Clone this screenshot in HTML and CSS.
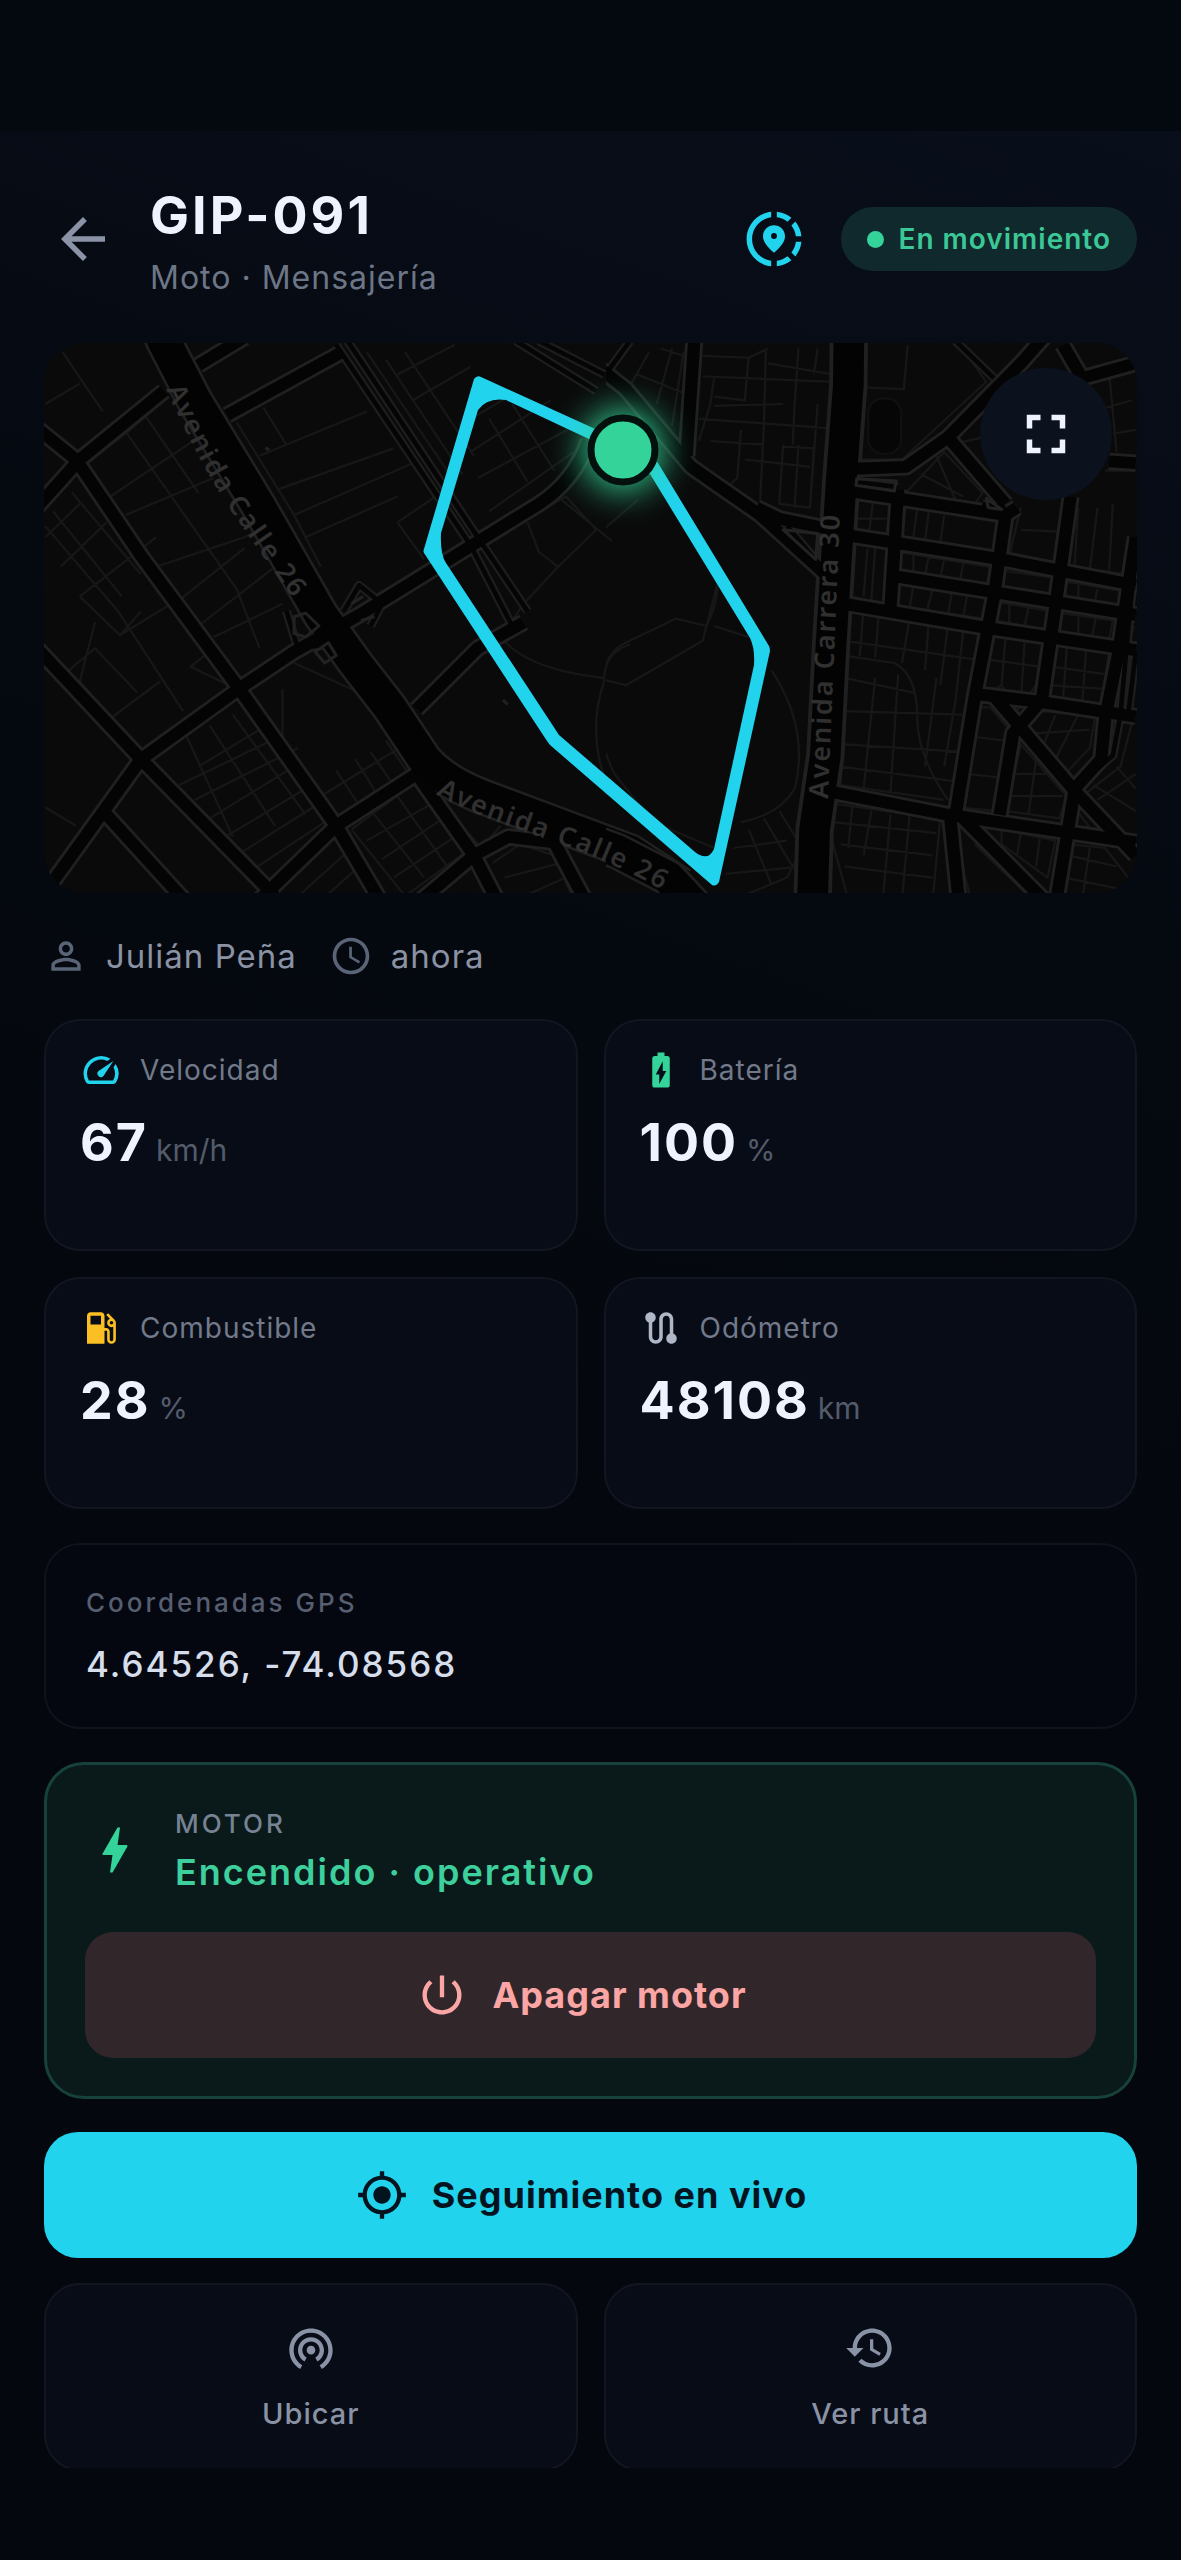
FILE: index.html
```html
<!DOCTYPE html>
<html lang="es">
<head>
    <meta charset="UTF-8">
    <meta name="viewport" content="width=device-width, initial-scale=1.0">
    <title>GIP-091</title>
    <link rel="stylesheet" href="styles.css">
</head>
<body>
    <header class="topbar">
        <button class="icon-btn back" aria-label="Volver">
            <svg class="icon icon-xl" viewBox="0 0 24 24"><path d="M20 11H7.83l5.59-5.59L12 4l-8 8 8 8 1.41-1.41L7.83 13H20v-2z"/></svg>
        </button>
        <div class="heading">
            <h1>GIP-091</h1>
            <p>Moto · Mensajería</p>
        </div>
        <button class="icon-btn share" aria-label="Compartir ubicación">
            <svg class="icon icon-xl" viewBox="0 0 24 24"><path d="M13.02 19.93v2.02c2.01-.2 3.84-1 5.32-2.21l-1.42-1.43c-1.11.86-2.44 1.44-3.9 1.62zM4.03 12c0-4.05 3.03-7.41 6.95-7.93V2.05C5.95 2.58 2.03 6.84 2.03 12c0 5.16 3.92 9.42 8.95 9.95v-2.02c-3.92-.52-6.95-3.88-6.95-7.93zM19.95 11h2.02c-.2-2.01-1-3.84-2.21-5.32l-1.43 1.43c.86 1.1 1.44 2.43 1.62 3.89zM18.34 4.26c-1.48-1.21-3.32-2.01-5.32-2.21v2.02c1.46.18 2.79.76 3.9 1.62l1.42-1.43zM18.33 16.9l1.43 1.42c1.21-1.48 2.01-3.31 2.21-5.32h-2.02c-.18 1.46-.76 2.79-1.62 3.9zM16 11.1C16 8.61 14.1 7 12 7s-4 1.61-4 4.1c0 1.66 1.33 3.63 4 5.9 2.67-2.27 4-4.24 4-5.9zm-4 .9a1.07 1.07 0 0 1 0-2.14A1.07 1.07 0 0 1 12 12z"/></svg>
        </button>
        <span class="status">En movimiento</span>
    </header>

    <main class="content">
        <section class="map">
            <svg class="map-canvas" viewBox="44 343 1093 550" preserveAspectRatio="xMidYMid slice" role="img" aria-label="Mapa">
                <defs>
                    <path id="w-avenue" d="M330-20L350 30L430 190L600 480L760 770L850 900L940 1020L1030 1160Q1080 1220 1180 1260L1568 1410L1700 1500"/>
                    <path id="w-road" d="M0 250L120 350L290 610L540 960L800 1340L930 1568M0 500L130 350L350 165M60 1490L290 1160L545 970L690 870L860 770L1150 585L1330 470Q1420 410 1460 300M0 840L290 1160L640 1530M600 1540L800 1340L1010 1200M200 1310L420 1560M440 95L560 20M515 230L815 60M1010 1025L1170 860L1290 790M1010 1200L1160 1420L1230 1560M1000 1560L1160 1420L1250 1370L1370 1385L1450 1540"/>
                    <path id="w-lane" d="M800 40L1150 580L1260 800M830 30L1170 560L1300 760M1270 30L1480 165M1330 30L1500 120M820 760L860 690L920 740L890 800M670 760L700 860L780 850L830 910"/>
                    <path id="w-thin" d="M85 60L190 220M40 200L130 145M240 260L540 700L600 860M300 230L440 440M160 350L250 280L350 190M210 450L440 290M250 500L480 400M330 640L560 560L600 540M390 730L560 590M440 800L640 640M170 330L240 270M40 530L230 760L400 1030M60 490L240 720M110 440L290 660M40 560L130 470M80 640L200 520M130 720L230 640L330 560M130 720L235 825L290 760M170 790L130 950L220 1060M235 825L400 720M90 930L170 860L280 980M210 1050L340 950M520 960L420 910L480 860M540 250L690 500L760 640M610 210L670 310M600 340L880 220M650 430L950 320M690 500L1000 360M720 560L960 450M960 520L1030 620M960 520L1060 450M480 830L660 740M660 970L660 1110L770 1300M690 900L860 980M930 80L1130 390M980 60L1160 340M880 60L1090 380M960 120L1110 40M1000 190L1150 100M1120 260L1250 180M1150 330L1360 190M1170 400L1440 250M1200 490L1420 330M1200 240L1300 410M1260 200L1370 380M1190 570L1300 510L1400 450L1480 540L1380 640L1330 600L1300 520M1390 460L1520 570M1380 640L1290 740L1230 830Q1300 920 1500 940M1568 850Q1500 870 1500 950Q1450 1100 1520 1260M410 1100L530 1370M470 1070L640 1340M530 1040L720 1310M440 1180L600 1080M390 1230L650 1100M430 1270L700 1130M470 1320L690 1180M510 1370L720 1240M540 1420L740 1290M580 1460L770 1330M760 1260L980 1120M800 1190L870 1300M850 1160L910 1260M890 1140L950 1230M930 1110L990 1200M840 1350L1010 1220L1140 1410L980 1530L840 1350M880 1380L1050 1280M920 1430L1080 1320M950 1480L1110 1370M900 1310L1030 1480M960 1260L1090 1450M650 1500L780 1390M690 1540L830 1410M740 1560L860 1450M1210 1440L1280 1390L1370 1420L1420 1540M1240 1480L1390 1440M1270 1540L1400 1480M40 1290L120 1340M1110 1320L1180 1400L1230 1340"/>
                    <path id="e-avenue" d="M702-20L700 150L682 400L655 850L640 1150L612 1350L606 1568"/>
                    <path id="e-road" d="M298 30L278 340M-100-20L120 160L290 370L470 500L640 660M460 480L520 510L660 540M715 375L850 370L960 290L1150 90L1210 20M1260 40L1310 130L1450 90M700 435L1110 500L1140 480M700 555L1100 620L1450 690M820 665L1450 770M690 740L1060 805L1450 865M1040 985L1200 1005L1450 1045M640 1245L960 1310L1450 1385M960 290L1110 470M1380 355L1450 360M830 430L810 750M1110 500L1080 720L1030 990L980 1310M1280 450L1240 750L1205 1000L1130 1090L1095 1310M1450 560L1405 870L1370 1050L1360 1160L1290 1240M1080 990L1290 1245L1450 1420M1290 1245L1240 1560M965 1310L990 1560M990 1310L1210 1540"/>
                    <path id="e-lane" d="M980 30L1080 130M130 30L60 130M1440 700L1410 1040L1390 1150L1290 1240M540 530L630 640M720 410L830 425M1050 470L1110 480M1450 870L1430 1040"/>
                    <path id="e-thin" d="M180 60L120 170M240 50L200 200M270 60L240 260M210 50L270 70M150 120L270 170M320 70L440 75L430 190L350 180M320 125L660 140M350 130L340 200L310 300M350 205L530 200M310 240L650 265M340 300L480 310M440 75L490 50M490 90L660 120M485 50L480 250L470 460M420 270L410 400L380 430M570 50L560 200L555 310M620 50L610 120M530 310L520 470L600 480L610 320L530 315M570 310L560 480M430 350L600 370M620 200L600 480M855 40L845 160L740 155M740 40L725 350L840 350L1060 140L990 40M850 440L950 330L1050 440L1030 470L850 440M890 390L1000 450M930 340L980 460M970 310L1050 290M1150 480L1120 610L1250 630L1270 470M1150 540L1250 545M1300 480L1290 640L1420 660L1445 560M1350 480L1330 650M1390 470L1380 660M1370 380L1450 380M1310 150L1440 110M1370 210L1440 190M1390 280L1450 270M1380 110L1400 330M720 460L710 540L800 550L810 470L720 460M765 460L755 540M720 510L800 510M845 475L830 560L1080 600L1095 520L845 475M880 480L870 560M910 490L900 570M950 500L940 575M710 575L705 720L795 740L800 590L710 575M750 590L740 720M770 590L760 730M830 600L1070 640L1060 695L825 655ZM870 610V660M910 610L900 665M950 620L940 670M1000 630L990 685M830 685L1060 725L1050 780L825 745ZM870 690L860 750M920 700L905 760M970 710L960 770M1010 715L1000 775M1100 650L1240 670L1230 725L1095 700ZM1090 735L1225 760L1215 810L1080 785ZM1120 740V790M1170 750L1160 800M1270 680L1415 705L1410 755L1265 735ZM1255 765L1390 785L1380 840L1250 820ZM1300 690V740M1350 700L1340 750M1300 770V830M1345 780L1335 835M1420 795L1445 800L1435 850L1415 845ZM700 750L690 870M740 750L730 880M780 760L770 885M700 750L1040 810L1020 990M860 780L840 900M910 790L900 920M960 800L940 960M1000 810L980 1000M690 840L1030 890M690 880L820 900Q880 930 880 1050Q880 1150 960 1270M690 940L870 980M690 1030L1020 1040M690 1120L1000 1140M680 1180L980 1220M770 940L740 1240M830 930L810 1250M930 940L900 1180M980 1000L950 1180M690 960L680 1230L950 1270M1070 820L1050 990L1100 960L1140 1030L1190 960L1210 840L1070 820M1110 830L1100 960M1160 840L1150 1010M1060 890L1200 910M1235 850L1220 990L1360 1010L1380 870ZM1270 860L1260 1000M1320 870L1310 1010M1230 910L1370 930M1225 960L1365 970M1400 880L1430 885L1410 1020L1385 1015ZM1040 1020L990 1290L1090 1300L1120 1080L1070 1020ZM1030 1100L1110 1110M1010 1200L1100 1210M1165 1065L1200 1030L1345 1040L1330 1130L1270 1195ZM1240 1040L1210 1120M1300 1040L1240 1160M1190 1090L1330 1080M1150 1120L1110 1300L1250 1320L1270 1260ZM1190 1160L1170 1310M1130 1200L1220 1200M1120 1260L1260 1260M1380 1050L1360 1140L1290 1220M1400 1050L1390 1150L1310 1230M1440 1060L1410 1180L1310 1260L1390 1360L1450 1370M1340 1230L1450 1300M1350 1270L1450 1200M1400 1180L1450 1240M1290 1290L1330 1345L1285 1340ZM660 1280L940 1320L920 1540M660 1280L655 1370L700 1540M710 1290L700 1400M760 1300L740 1420M810 1310L790 1540M860 1310L840 1540M660 1330L930 1360M680 1390L920 1420M690 1450L920 1480M1100 1350L1240 1380L1220 1480L1100 1390ZM1150 1360L1140 1420M1200 1370L1190 1450M1280 1390L1370 1400L1430 1480M1275 1420L1400 1450M1265 1480L1450 1520M1330 1400L1310 1540M970 1340L1020 1540M1030 1390L1170 1530M500 920Q600 1080 560 1240Q520 1310 420 1330M40 1000Q60 880 110 850L250 780L330 800Q360 740 360 680M360 680L320 840L120 960L0 930M60 940Q20 1050 90 1200L190 1330L350 1400M0 600L60 540L150 460M0 490L50 530M350 800L440 830M520 1300L580 1400L540 1480L400 1540M440 1350L500 1500M480 1320L560 1460M400 1400L540 1380M380 1470L580 1450"/>
                </defs>

                <rect class="land" x="44" y="343" width="1093" height="550"/>
                <!-- oeste -->
                <g transform="translate(30 330) scale(.3827 .37)">
                    <use class="street" href="#w-thin"/>
                    <use class="lane-edge" href="#w-lane"/>
                    <use class="road-edge" href="#w-road"/>
                    <use class="avenue-edge" href="#w-avenue"/>
                    <use class="lane" href="#w-lane"/>
                    <use class="road" href="#w-road"/>
                    <use class="avenue" href="#w-avenue"/>
                    <path class="island" d="M840 740L870 720M865 785L900 775M690 775L720 765L755 800L720 830L690 820ZM745 870L780 845L800 880L770 900ZM615 318L625 324M1236 1000L1248 1012"/>
                </g>
                <!-- este -->
                <svg x="606" y="343" width="531" height="550" viewBox="606 343 531 550">
                    <g transform="translate(580 330) scale(.3833 .37)">
                        <use class="street" href="#e-thin"/>
                        <use class="lane-edge" href="#e-lane"/>
                        <use class="road-edge" href="#e-road"/>
                        <use class="avenue-edge" href="#e-avenue"/>
                        <path class="avenue-edge" d="M-30 1360L100 1410L230 1480L320 1580"/>
                        <use class="lane" href="#e-lane"/>
                        <use class="road" href="#e-road"/>
                        <use class="avenue narrow" href="#e-avenue"/>
                        <path class="avenue" d="M-30 1360L100 1410L230 1480L320 1580"/>
                        <rect class="track" x="752" y="185" width="86" height="150" rx="40"/>
                        <path class="island" d="M722 402L825 408L820 435L720 420ZM1060 455L1100 485L1065 480ZM530 540L620 550L615 620Z"/>
                    </g>
                </svg>

                <path id="label-a" class="guide" d="M166 389Q200 465 230 509T330 650"/>
                <path id="label-b" class="guide" d="M436 794C500 832 600 845 690 908"/>
                <path id="label-c" class="guide" d="M828 799L841 490"/>
                <text class="street-name"><textPath href="#label-a">Avenida Calle 26</textPath></text>
                <text class="street-name"><textPath href="#label-b">Avenida Calle 26</textPath></text>
                <text class="street-name"><textPath href="#label-c">Avenida Carrera 30</textPath></text>

                <!-- recorrido -->
                <path class="route" fill-rule="evenodd" d="M481 377L626 443L658 463L769 646Q770 648 770 651L719 882Q716 887 712 885L550 745L547 741L424 553Q423 551 424 549L474 379Q477 375 481 377ZM478 410L441 533Q440 554 446 563L559 735L695 852Q708 862 714 849L754 665Q755 648 750 638L650 474L623 455L506 400Q487 397 478 410Z"/>
                <circle class="marker-glow" cx="623" cy="450" r="40"/>
                <circle class="marker" cx="623" cy="450" r="32"/>
            </svg>
            <button class="fullscreen" aria-label="Pantalla completa">
                <svg class="icon icon-xl" viewBox="0 0 24 24"><path d="M7 14H5v5h5v-2H7v-3zm-2-4h2V7h3V5H5v5zm12 7h-3v2h5v-5h-2v3zM14 5v2h3v3h2V5h-5z"/></svg>
            </button>
        </section>

        <div class="meta">
            <span class="meta-item">
                <svg class="icon icon-md" viewBox="0 0 24 24"><path d="M12 5.9c1.16 0 2.1.94 2.1 2.1s-.94 2.1-2.1 2.1S9.9 9.16 9.9 8s.94-2.1 2.1-2.1m0 9c2.97 0 6.1 1.46 6.1 2.1v1.1H5.9V17c0-.64 3.13-2.1 6.1-2.1M12 4C9.79 4 8 5.79 8 8s1.79 4 4 4 4-1.79 4-4-1.79-4-4-4zm0 9c-2.67 0-8 1.34-8 4v3h16v-3c0-2.66-5.33-4-8-4z"/></svg>
                Julián Peña
            </span>
            <span class="meta-item">
                <svg class="icon icon-md" viewBox="0 0 24 24"><path d="M11.99 2C6.47 2 2 6.48 2 12s4.47 10 9.99 10C17.52 22 22 17.52 22 12S17.52 2 11.99 2zM12 20c-4.42 0-8-3.58-8-8s3.58-8 8-8 8 3.58 8 8-3.58 8-8 8zm.5-13H11v6l5.25 3.15.75-1.23-4.5-2.67z"/></svg>
                ahora
            </span>
        </div>

        <section class="stats">
            <div class="stat">
                <div class="stat-label">
                    <svg class="icon icon-sm cyan" viewBox="0 0 24 24"><path d="M20.38 8.57l-1.23 1.85a8 8 0 0 1-.22 7.58H5.07A8 8 0 0 1 15.58 6.85l1.85-1.23A10 10 0 0 0 3.35 19a2 2 0 0 0 1.72 1h13.85a2 2 0 0 0 1.74-1 10 10 0 0 0-.27-10.44zm-9.79 6.84a2 2 0 0 0 2.83 0l5.66-8.49-8.49 5.66a2 2 0 0 0 0 2.83z"/></svg>
                    Velocidad
                </div>
                <div class="stat-value">67 <small>km/h</small></div>
            </div>
            <div class="stat">
                <div class="stat-label">
                    <svg class="icon icon-sm green" viewBox="0 0 24 24"><path d="M15.67 4H14V2h-4v2H8.33C7.6 4 7 4.6 7 5.33v15.33C7 21.4 7.6 22 8.33 22h7.33c.74 0 1.34-.6 1.34-1.33V5.33C17 4.6 16.4 4 15.67 4zM11 20v-5.5H9L13 7v5.5h2L11 20z"/></svg>
                    Batería
                </div>
                <div class="stat-value">100 <small>%</small></div>
            </div>
            <div class="stat">
                <div class="stat-label">
                    <svg class="icon icon-sm amber" viewBox="0 0 24 24"><path d="M19.77 7.23l.01-.01-3.72-3.72L15 4.56l2.11 2.11c-.94.36-1.61 1.26-1.61 2.33 0 1.38 1.12 2.5 2.5 2.5.36 0 .69-.08 1-.21v7.21c0 .55-.45 1-1 1s-1-.45-1-1V14c0-1.1-.9-2-2-2h-1V5c0-1.1-.9-2-2-2H6c-1.1 0-2 .9-2 2v16h10v-7.5h1.5v5c0 1.38 1.12 2.5 2.5 2.5s2.5-1.12 2.5-2.5V9c0-.69-.28-1.32-.73-1.77zM12 10H6V5h6v5zm6 0c-.55 0-1-.45-1-1s.45-1 1-1 1 .45 1 1-.45 1-1 1z"/></svg>
                    Combustible
                </div>
                <div class="stat-value">28 <small>%</small></div>
            </div>
            <div class="stat">
                <div class="stat-label">
                    <svg class="icon icon-sm silver" viewBox="0 0 24 24"><path d="M19 15.18V7c0-2.21-1.79-4-4-4s-4 1.79-4 4v10c0 1.1-.9 2-2 2s-2-.9-2-2V8.82C8.16 8.4 9 7.3 9 6c0-1.66-1.34-3-3-3S3 4.34 3 6c0 1.3.84 2.4 2 2.82V17c0 2.21 1.79 4 4 4s4-1.79 4-4V7c0-1.1.9-2 2-2s2 .9 2 2v8.18c-1.16.41-2 1.51-2 2.82 0 1.66 1.34 3 3 3s3-1.34 3-3c0-1.31-.84-2.4-2-2.82z"/></svg>
                    Odómetro
                </div>
                <div class="stat-value">48108 <small>km</small></div>
            </div>
        </section>

        <section class="coords">
            <p class="coords-label">Coordenadas GPS</p>
            <p class="coords-value">4.64526, -74.08568</p>
        </section>

        <section class="motor">
            <div class="motor-info">
                <svg class="icon icon-lg green" viewBox="0 0 24 24"><path d="M11 21h-1l1-7H7.5c-.88 0-.33-.75-.31-.78C8.48 10.94 10.42 7.54 13.01 3h1l-1 7h3.51c.4 0 .62.19.4.66C12.97 17.55 11 21 11 21z"/></svg>
                <div>
                    <p class="motor-label">MOTOR</p>
                    <p class="motor-state">Encendido · operativo</p>
                </div>
            </div>
            <button class="btn btn-danger">
                <svg class="icon" viewBox="0 0 24 24"><path d="M13 3h-2v10h2V3zm4.83 2.17l-1.42 1.42C17.99 7.86 19 9.81 19 12c0 3.87-3.13 7-7 7s-7-3.13-7-7c0-2.19 1.01-4.14 2.58-5.42L6.17 5.17C4.23 6.82 3 9.26 3 12c0 4.97 4.03 9 9 9s9-4.03 9-9c0-2.74-1.23-5.18-3.17-6.83z"/></svg>
                Apagar motor
            </button>
        </section>

        <button class="btn btn-primary">
            <svg class="icon" viewBox="0 0 24 24"><path d="M12 8c-2.21 0-4 1.79-4 4s1.79 4 4 4 4-1.79 4-4-1.79-4-4-4zm8.94 3c-.46-4.17-3.77-7.48-7.94-7.94V1h-2v2.06C6.83 3.52 3.52 6.83 3.06 11H1v2h2.06c.46 4.17 3.77 7.48 7.94 7.94V23h2v-2.06c4.17-.46 7.48-3.77 7.94-7.94H23v-2h-2.06zM12 19c-3.87 0-7-3.13-7-7s3.13-7 7-7 7 3.13 7 7-3.13 7-7 7z"/></svg>
            Seguimiento en vivo
        </button>

        <div class="actions">
            <button class="action">
                <svg class="icon" viewBox="0 0 24 24"><path d="M12 11c-1.1 0-2 .9-2 2s.9 2 2 2 2-.9 2-2-.9-2-2-2zm6 2c0-3.31-2.69-6-6-6s-6 2.69-6 6c0 2.22 1.21 4.15 3 5.19l1-1.74c-1.19-.7-2-1.97-2-3.45 0-2.21 1.79-4 4-4s4 1.79 4 4c0 1.48-.81 2.75-2 3.45l1 1.74c1.79-1.04 3-2.97 3-5.19zM12 3C6.48 3 2 7.48 2 13c0 3.7 2.01 6.92 4.99 8.65l1-1.73C5.61 18.53 4 15.96 4 13c0-4.42 3.58-8 8-8s8 3.58 8 8c0 2.96-1.61 5.53-4 6.92l1 1.73c2.99-1.73 5-4.95 5-8.65 0-5.52-4.48-10-10-10z"/></svg>
                Ubicar
            </button>
            <button class="action">
                <svg class="icon" viewBox="0 0 24 24"><path d="M13 3c-4.97 0-9 4.03-9 9H1l3.89 3.89.07.14L9 12H6c0-3.87 3.13-7 7-7s7 3.13 7 7-3.13 7-7 7c-1.93 0-3.68-.79-4.94-2.06l-1.42 1.42C8.27 19.99 10.51 21 13 21c4.97 0 9-4.03 9-9s-4.03-9-9-9zm-1 5v5l4.28 2.54.72-1.21-3.5-2.08V8H12z"/></svg>
                Ver ruta
            </button>
        </div>
    </main>
</body>
</html>
```
FILE: styles.css
```css
* {
    box-sizing: border-box;
    margin: 0;
}
body {
    display: flex;
    flex-direction: column;
    height: 100vh;
    padding: 132px 0 92px;
    font-family: 'Inter', 'Liberation Sans', sans-serif;
    font-size: 28px;
    letter-spacing: 1px;
    color: #eef3ff;
    background: linear-gradient(#04080f 131px, transparent 131px), linear-gradient(200deg, #090f1c 0, #050910 900px, #04070e 1600px);
}
button {
    font: inherit;
    letter-spacing: inherit;
    color: inherit;
    background: none;
    border: none;
    padding: 0;
    cursor: pointer;
}
.icon {
    display: block;
    flex: none;
    width: 52px;
    height: 52px;
    fill: currentColor;
}
.icon-sm {
    width: 42px;
    height: 42px;
}
.icon-md {
    width: 44px;
    height: 44px;
    color: #596476;
}
.icon-lg {
    width: 60px;
    height: 60px;
}
.icon-xl {
    width: 66px;
    height: 66px;
}
.cyan { color: #22d3ee; }
.green { color: #34d399; }
.amber { color: #fbbf24; }
.silver { color: #b0b8c8; }

/* cabecera */
.topbar {
    display: flex;
    align-items: center;
    padding: 46px 44px 43px 50px;
}
.back {
    margin-right: 34px;
    color: #8a94a6;
}
.heading {
    flex: 1;
    padding-top: 8px;
}
.heading h1 {
    font-size: 52px;
    line-height: 60px;
    font-weight: 700;
    letter-spacing: 3px;
}
.heading p {
    margin-top: 10px;
    font-size: 32px;
    line-height: 44px;
    color: #6d7686;
}
.share {
    margin-right: 34px;
    color: #22d3ee;
}
.status {
    display: flex;
    align-items: center;
    gap: 14px;
    padding: 14px 26px;
    line-height: 36px;
    font-weight: 600;
    border-radius: 32px;
    color: #3cc896;
    background: #10292c;
}
.status::before {
    content: "";
    width: 17px;
    height: 17px;
    border-radius: 50%;
    background: #34d399;
}

.content {
    flex: 1;
    min-height: 0;
    overflow: hidden;
    padding: 0 44px;
}

/* mapa */
.map {
    position: relative;
    aspect-ratio: 1093 / 550;
    overflow: hidden;
    border-radius: 40px;
}
.map-canvas {
    display: block;
    width: 100%;
    height: 100%;
}
.map-canvas use,
.map-canvas path {
    fill: none;
    stroke-linejoin: round;
}
.land { fill: #0a0a0a; }
.street { stroke: #171717; stroke-width: 6; }
.lane-edge { stroke: #1d1d1d; stroke-width: 24; }
.lane { stroke: #050505; stroke-width: 12; }
.road-edge { stroke: #202020; stroke-width: 47; }
.road { stroke: #040404; stroke-width: 32; }
.avenue-edge { stroke: #202020; stroke-width: 100; }
.avenue { stroke: #030303; stroke-width: 86; }
.narrow { stroke-width: 80; }
.island { stroke: #222222; stroke-width: 8; }
.track { fill: #060606; stroke: #101010; stroke-width: 6; }
.street-name {
    font-family: 'Noto Sans', sans-serif;
    font-size: 27px;
    font-weight: 600;
    letter-spacing: 2px;
    fill: #303030;
}
.map-canvas .route {
    fill: #22d3ee;
}
.marker-glow {
    fill: #34d399;
    filter: blur(18px);
}
.marker {
    fill: #34d399;
    stroke: #04100d;
    stroke-width: 7;
}
.fullscreen {
    position: absolute;
    top: 25px;
    right: 25px;
    padding: 33px;
    border-radius: 50%;
    background: #0b111d;
}

.meta {
    display: flex;
    gap: 32px;
    margin: 41px 0;
    font-size: 33px;
    line-height: 44px;
    color: #8a92a3;
}
.meta-item {
    display: flex;
    gap: 18px;
}

/* tarjetas */
.stats,
.actions {
    display: grid;
    grid-template-columns: 1fr 1fr;
    gap: 26px;
}
.stat,
.action {
    border: 2px solid #121620;
    border-radius: 36px;
    background: #080c17;
}
.stat {
    aspect-ratio: 23 / 10;
    padding: 28px 34px;
}
.stat-label {
    display: flex;
    align-items: center;
    gap: 18px;
    color: #727a8a;
}
.stat-value {
    display: flex;
    align-items: baseline;
    gap: 8px;
    margin-top: 22px;
    font-size: 52px;
    line-height: 60px;
    font-weight: 700;
    letter-spacing: 2px;
}
.stat-value small {
    font-size: 30px;
    font-weight: 400;
    letter-spacing: 0;
    color: #535b6b;
}

.coords {
    margin: 34px 0 33px;
    padding: 41px 40px;
    border: 2px solid #0f131b;
    border-radius: 36px;
    background: #04070f;
}
.coords-label {
    font-size: 26px;
    line-height: 34px;
    font-weight: 500;
    letter-spacing: 3px;
    color: #565e70;
}
.coords-value {
    margin-top: 22px;
    font-size: 35px;
    line-height: 44px;
    font-weight: 500;
    letter-spacing: 2px;
    color: #d5deea;
}

.motor {
    margin-bottom: 33px;
    padding: 41px 38px 38px;
    border: 3px solid #17423b;
    border-radius: 40px;
    background: #0a191a;
}
.motor-info {
    display: flex;
    align-items: center;
    gap: 30px;
    margin-bottom: 38px;
}
.motor-label {
    font-size: 26px;
    line-height: 36px;
    font-weight: 500;
    letter-spacing: 3px;
    color: #778293;
}
.motor-state {
    margin-top: 8px;
    font-size: 36px;
    line-height: 44px;
    font-weight: 600;
    letter-spacing: 2px;
    color: #3dd09c;
}

.btn {
    display: flex;
    align-items: center;
    justify-content: center;
    gap: 24px;
    width: 100%;
    padding: 37px 56px 37px 38px;
    font-size: 36px;
    font-weight: 700;
    border-radius: 28px;
}
.btn-danger {
    color: #fca5a5;
    background: #31272b;
}
.btn-primary {
    margin-bottom: 25px;
    border-radius: 34px;
    color: #04141f;
    background: #22d3ee;
}

.action {
    display: flex;
    flex-direction: column;
    align-items: center;
    gap: 22px;
    padding: 37px;
    font-size: 29px;
    line-height: 36px;
    font-weight: 500;
    color: #8a93a5;
}
```
